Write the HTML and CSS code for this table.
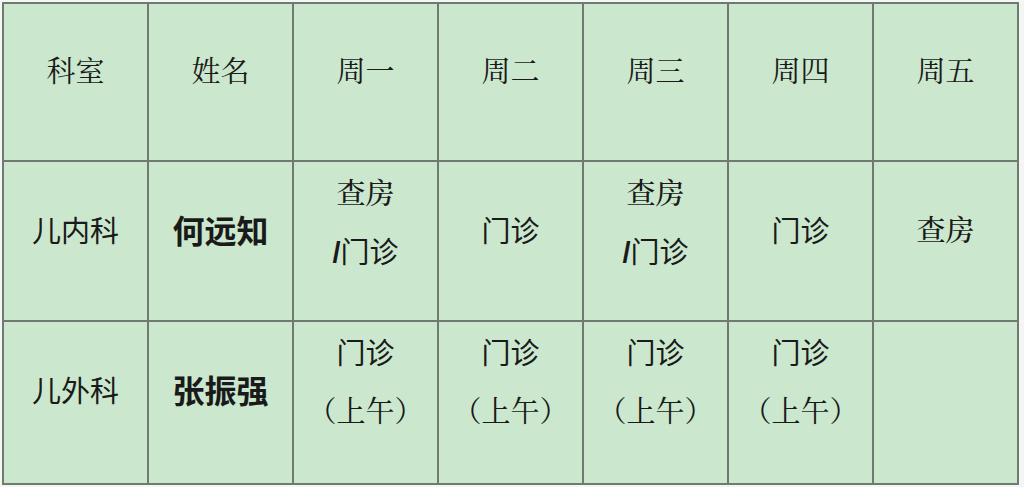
FILE: index.html
```html
<!DOCTYPE html>
<html lang="zh-CN">
<head>
<meta charset="utf-8">
<title>排班表</title>
<link rel="stylesheet" href="styles.css">
</head>
<body>
<table class="schedule">
  <colgroup>
    <col class="c"><col class="c"><col class="c"><col class="c"><col class="c"><col class="c"><col class="c">
  </colgroup>
  <tr class="row head">
    <td class="serif">科室</td>
    <td class="serif">姓名</td>
    <td class="serif">周一</td>
    <td class="serif">周二</td>
    <td class="serif">周三</td>
    <td class="serif">周四</td>
    <td class="serif">周五</td>
  </tr>
  <tr class="row r2">
    <td>儿内科</td>
    <td class="name">何远知</td>
    <td class="multi"><span class="serif strong">查房</span><br><span class="slash">/</span>门诊</td>
    <td>门诊</td>
    <td class="multi"><span class="serif strong">查房</span><br><span class="slash">/</span>门诊</td>
    <td>门诊</td>
    <td class="serif strong">查房</td>
  </tr>
  <tr class="row r3">
    <td>儿外科</td>
    <td class="name">张振强</td>
    <td class="multi">门诊<br><span class="serif">（上午）</span></td>
    <td class="multi">门诊<br><span class="serif">（上午）</span></td>
    <td class="multi">门诊<br><span class="serif">（上午）</span></td>
    <td class="multi">门诊<br><span class="serif">（上午）</span></td>
    <td></td>
  </tr>
</table>
</body>
</html>
```
FILE: styles.css
```css
html, body {
  margin: 0;
  padding: 0;
  background: #f4f6f4;
}
body {
  padding: 2px 0 0 2px;
  font-family: "Noto Sans CJK SC", "Noto Sans", sans-serif;
  color: #1a1a1a;
}
.schedule {
  width: 1017px;
  border-collapse: collapse;
  table-layout: fixed;
  background: #cbe8ce;
  border: 2px solid #6f7a70;
}
.schedule td {
  border: 2px solid #6f7a70;
  text-align: center;
  vertical-align: top;
  padding: 38px 0 0 0;
  font-size: 29px;
  line-height: 58px;
  box-sizing: border-box;
}
.head { height: 158px; }
.r2 { height: 160px; }
.r3 { height: 163px; }
.head td { padding-top: 37px; }
.schedule td.multi { padding-top: 0; }
.serif {
  font-family: "Noto Serif CJK SC", "Noto Sans CJK SC", serif;
}
.strong { font-weight: 500; }
.name {
  font-size: 32px !important;
  font-weight: 700;
}
.slash {
  font-family: "Liberation Sans", sans-serif;
  font-weight: 700;
}
```
